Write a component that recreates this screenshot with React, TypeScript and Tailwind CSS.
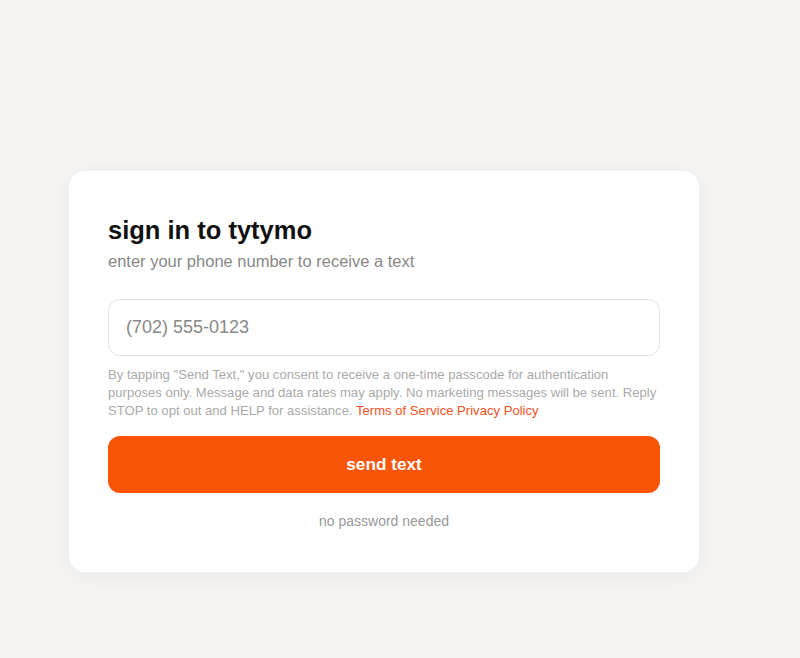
export default function App() {
  return (
    <div className="min-h-screen bg-[#f5f4f2] pt-[171px] pl-[69px] font-['Liberation_Sans',Arial,sans-serif]">
      <div className="flex w-[630px] flex-col rounded-2xl bg-white px-[39px] pt-[45px] pb-[41px] shadow-[0_4px_24px_rgba(0,0,0,0.05)]">
        <h1 className="text-[25.5px] leading-[29px] font-bold text-[#111]">sign in to tytymo</h1>
        <p className="mt-1 text-[16.5px] leading-6 text-[#888]">enter your phone number to receive a text</p>

        <input
          type="tel"
          placeholder="(702) 555-0123"
          className="mt-[26px] h-[57px] w-full rounded-xl border border-[#e2e2e2] bg-white px-[17px] text-[18px] text-[#333] placeholder:text-[#888] focus:outline-none"
        />

        <p className="mt-[10px] text-[13.1px] leading-[18px] text-[#aaa]">
          By tapping "Send Text," you consent to receive a one-time passcode for authentication
          <br />
          purposes only. Message and data rates may apply. No marketing messages will be sent. Reply
          <br />
          STOP to opt out and HELP for assistance.{' '}
          <a className="text-[#f4511e]">Terms of Service Privacy Policy</a>
        </p>

        <button className="mt-4 h-[57px] w-full rounded-xl bg-[#fa5505] text-[17.2px] font-bold text-white">
          send text
        </button>

        <p className="mt-[18px] text-center text-[14px] leading-5 text-[#999]">no password needed</p>
      </div>
    </div>
  )
}
